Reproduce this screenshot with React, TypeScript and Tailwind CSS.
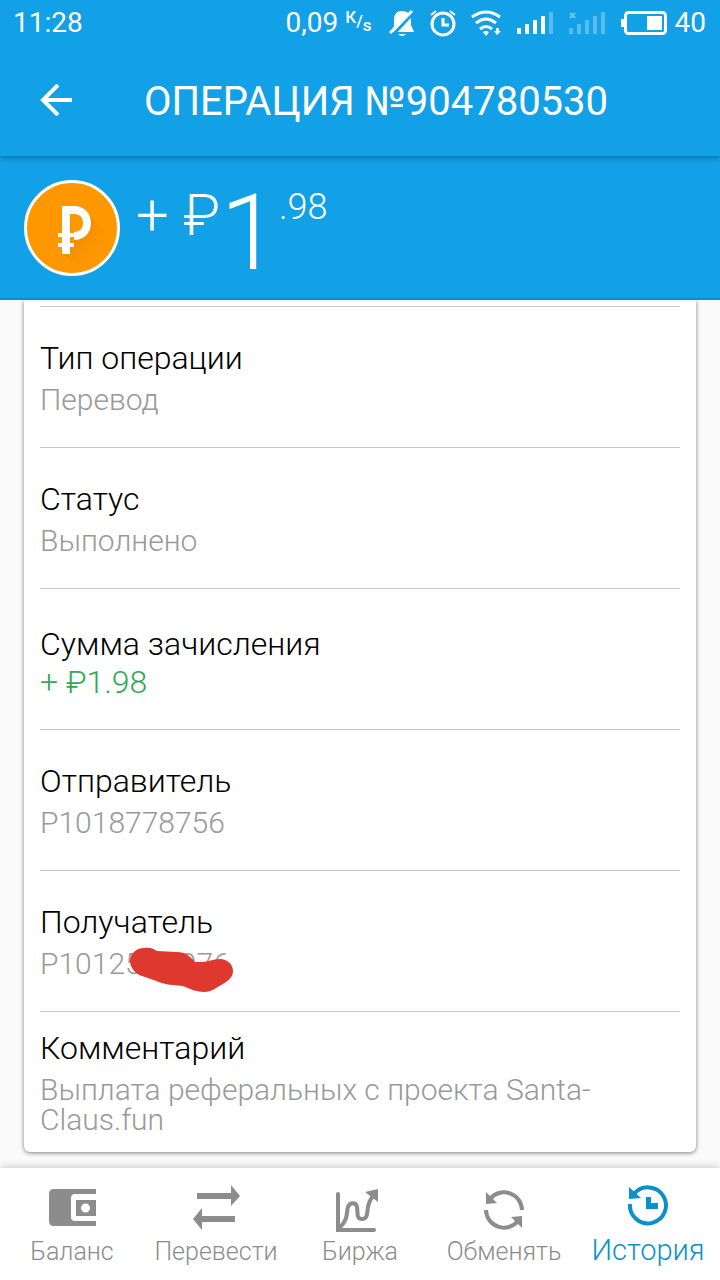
import type { ReactNode } from 'react'
import clsx from 'clsx'

interface Detail {
  label: string
  value: ReactNode
  positive?: boolean
}

const details: Detail[] = [
  { label: 'Тип операции', value: 'Перевод' },
  { label: 'Статус', value: 'Выполнено' },
  { label: 'Сумма зачисления', value: '+ ₽1.98', positive: true },
  { label: 'Отправитель', value: 'P1018778756' },
  { label: 'Получатель', value: <HiddenAccount /> },
  { label: 'Комментарий', value: 'Выплата реферальных с проекта Santa-Claus.fun' },
]

const tabs = [
  { label: 'Баланс', icon: <WalletIcon /> },
  { label: 'Перевести', icon: <TransferIcon /> },
  { label: 'Биржа', icon: <ChartIcon /> },
  { label: 'Обменять', icon: <ExchangeIcon /> },
  { label: 'История', icon: <HistoryIcon />, active: true },
]

function HiddenAccount() {
  return (
    <span className="relative inline-block">
      P10125***976
      <svg className="absolute left-[90px] -top-[3px]" width="104" height="48" viewBox="0 0 104 48">
        <path
          fill="#df382e"
          d="M14 2C6 2 0 8 0 15C0 22 6 29 15 31C24 34 35 39 43 39L53 40C60 43 67 46 74 46C82 46 87 41 93 38C99 34 103 31 103 25C103 18 97 13 90 13C82 13 79 16 72 16L65 16C60 10 55 6 47 6L27 5C23 2 19 1 14 2Z"
        />
      </svg>
    </span>
  )
}

function WalletIcon() {
  return (
    <svg width="48" height="48" viewBox="0 0 48 48" fill="currentColor">
      <path d="M6 5H48V10H27Q23 10 23 14V33Q23 37 27 37H48V42H6Q1 42 1 37V10Q1 5 6 5Z" />
      <path fillRule="evenodd" d="M28 16H48V32H28ZM37.5 19.5A4.5 4.5 0 1 0 37.5 28.500A4.5 4.5 0 1 0 37.5 19.5Z" />
    </svg>
  )
}

function TransferIcon() {
  return (
    <svg width="48" height="48" viewBox="0 0 48 48" fill="currentColor">
      <path d="M5 9H39V1L48 12L39 22V15H5Z" />
      <path d="M43 38H10V46L1 35L10 24V32H43Z" />
    </svg>
  )
}

function ChartIcon() {
  return (
    <svg width="48" height="48" viewBox="0 0 48 48" fill="none" stroke="currentColor" strokeWidth="4" strokeLinecap="round">
      <path d="M2 10V46H38" />
      <path d="M3 44C13 36 10 28 12 23C14 18 20 18 21 23C22 28 20 35 26 35C32 35 31 28 32 23C33 18 34 15 38 11" />
      <path d="M29 8L42 5V18Z" fill="currentColor" stroke="none" />
    </svg>
  )
}

function ExchangeIcon() {
  return (
    <svg width="48" height="48" viewBox="0 0 48 48" fill="none" stroke="currentColor" strokeWidth="4">
      <path d="M10 15A18 18 0 0 1 42 26" />
      <path d="M6 26A18 18 0 0 0 38 37" />
      <path d="M6 8V20L17 19Z" fill="currentColor" stroke="none" />
      <path d="M31 33L42 32V44Z" fill="currentColor" stroke="none" />
    </svg>
  )
}

function HistoryIcon() {
  return (
    <svg width="48" height="48" viewBox="0 0 48 48" fill="none" stroke="currentColor" strokeWidth="4">
      <path d="M10 14A18 18 0 1 1 6 24" />
      <path d="M5 7V19L17 18Z" fill="currentColor" stroke="none" />
      <path d="M22 17H27V23H34V29H22Z" fill="currentColor" stroke="none" />
    </svg>
  )
}

function MutedBell() {
  return (
    <svg width="26" height="28" viewBox="0 0 26 28" fill="#fff">
      <path d="M13 2C8 2 5 5 5 11V17L2 23H25L22 16V11C22 5 18 2 13 2Z" />
      <path d="M9 25H17Q13 29 9 25Z" />
      <path d="M25 3L3 27" stroke="#12a0e6" strokeWidth="3" />
      <path d="M23 2L1 24" stroke="#fff" strokeWidth="3" />
    </svg>
  )
}

function AlarmClock() {
  return (
    <svg width="26" height="28" viewBox="0 0 26 28" fill="none" stroke="#fff" strokeWidth="3">
      <circle cx="13" cy="15" r="11" />
      <path d="M13 9V16H19" />
      <path d="M1 6L6 2M25 6L20 2" strokeWidth="2" />
    </svg>
  )
}

function Wifi() {
  return (
    <svg width="30" height="28" viewBox="0 0 30 28" fill="none" stroke="#fff" strokeWidth="3">
      <path d="M1 8Q15 -2 29 8" />
      <path d="M5 14Q15 6 25 14" />
      <path d="M9 20Q15 15 21 20" />
      <path d="M12 23L15 27L18 23Q15 21 12 23Z" fill="#fff" stroke="none" />
      <path d="M25 19H28V22H30L26 26L23 22H25Z" fill="#fff" stroke="none" />
    </svg>
  )
}

function Signal({ empty = false }: { empty?: boolean }) {
  return (
    <svg width="36" height="24" viewBox="0 0 36 24" fill="#fff">
      <path d="M0 17H4V23H0ZM8 13H12V23H8ZM16 9H20V23H16ZM24 5H28V23H24Z" opacity={empty ? 0.3 : 1} />
      <path d="M32 1H36V23H32Z" opacity="0.3" />
      {empty && <path d="M1 2L6 7M6 2L1 7" stroke="#fff" strokeWidth="2" opacity="0.4" />}
    </svg>
  )
}

function Battery() {
  return (
    <svg width="46" height="24" viewBox="0 0 46 24">
      <rect x="4.5" y="1.5" width="40" height="21" rx="3" fill="none" stroke="#fff" strokeWidth="3" />
      <path d="M0 8H4V16H0ZM26 5H41V19H26Z" fill="#fff" />
    </svg>
  )
}

function StatusBar() {
  return (
    <div className="flex h-11 items-center justify-between pl-[13px] pr-[14px] pt-0.5 text-[28px] leading-8">
      <span>11:28</span>
      <div className="flex items-center">
        <span>0,09</span>
        <span className="ml-[7px] flex text-[17px] font-medium leading-5">
          <span className="-mt-1">К</span>
          <span>/</span>
          <span className="mt-1">s</span>
        </span>
        <div className="ml-[17px] flex items-center gap-[15px]">
          <MutedBell />
          <AlarmClock />
          <Wifi />
        </div>
        <div className="ml-4 flex items-center gap-4">
          <Signal />
          <Signal empty />
          <Battery />
        </div>
        <span className="ml-2">40</span>
      </div>
    </div>
  )
}

function RubleBadge() {
  return (
    <svg width="96" height="96" viewBox="0 0 96 96">
      <defs>
        <linearGradient id="badge-shade" x1="0" y1="0" x2="1" y2="1">
          <stop offset="0.3" stopColor="#e07f00" stopOpacity="0.6" />
          <stop offset="0.8" stopColor="#ff9800" stopOpacity="0" />
        </linearGradient>
      </defs>
      <circle cx="48" cy="48" r="46.5" fill="#ff9800" stroke="#fff" strokeWidth="3" />
      <path d="M38 74L50 60L66 36L86 56Q78 78 56 88Z" fill="url(#badge-shade)" />
      <path d="M46 34H59V52H46Z" fill="#ff9800" />
      <path
        fill="#fff"
        d="M38 26H50C60 26 67 33 67 43C67 53 60 60 50 60V52C55 52 59 49 59 43C59 37 55 34 50 34H46V53H50V57H46V63H50V67H46V74H38V67H34V63H38V57H34V53H38Z"
      />
    </svg>
  )
}

export default function App() {
  return (
    <div className="flex min-h-screen flex-col bg-[#fafafa] font-[Roboto,'Noto_Sans',sans-serif] font-light">
      <header className="relative bg-[#12a0e6] font-normal text-white shadow-[0_1px_6px_rgba(0,60,100,0.6)]">
        <StatusBar />
        <div className="flex h-28 items-center pl-10">
          <button type="button" aria-label="Назад">
            <svg width="32" height="32" viewBox="0 0 32 32" fill="none" stroke="#fff" strokeWidth="4">
              <path d="M18 1L3 16L18 31M3 16H32" />
            </svg>
          </button>
          <h1 className="ml-[72px] pt-1 text-[40px] leading-[48px]">ОПЕРАЦИЯ №904780530</h1>
        </div>
      </header>

      <section className="flex h-36 items-start border-b-2 border-[#0b90d2] bg-[#12a0e6] px-6 pt-6 text-white">
        <RubleBadge />
        <div className="ml-4 mt-[14px] flex items-start">
          <span className="text-[58px] leading-[43px]">+ ₽</span>
          <span className="text-[106px] leading-[78px]">1</span>
          <span className="text-[36px] leading-[27px]">.98</span>
        </div>
      </section>

      <main className="flex-1 px-6 pb-4">
        <dl className="rounded-b-md bg-white px-4 pt-1.5 shadow-[0_1px_4px_rgba(0,0,0,0.5)] [clip-path:inset(0_-8px_-8px_-8px)]">
          {details.map(({ label, value, positive }) => (
            <div
              key={label}
              className={clsx(
                'flex h-[141px] flex-col justify-center border-t border-[#c8c8c8]',
                positive ? 'pt-1.5' : 'pb-0.5',
              )}
            >
              <dt className="text-[32px] leading-10 text-black">{label}</dt>
              <dd
                className={clsx(
                  positive
                    ? 'text-[32px] leading-9 text-[#34a853]'
                    : 'mt-[7px] text-[30px] leading-[30px] text-[#999]',
                )}
              >
                {value}
              </dd>
            </div>
          ))}
        </dl>
      </main>

      <nav className="grid h-28 grid-cols-5 bg-white shadow-[0_-1px_8px_rgba(0,0,0,0.2)]">
        {tabs.map(({ label, icon, active }) => (
          <a
            key={label}
            href="#"
            className={clsx(
              'flex flex-col items-center',
              active ? 'pt-3 text-[29px] leading-[44px] text-[#0a90cc]' : 'pt-4 text-[25px] leading-10 text-[#8c8c8c]',
            )}
          >
            {icon}
            <span>{label}</span>
          </a>
        ))}
      </nav>
    </div>
  )
}
